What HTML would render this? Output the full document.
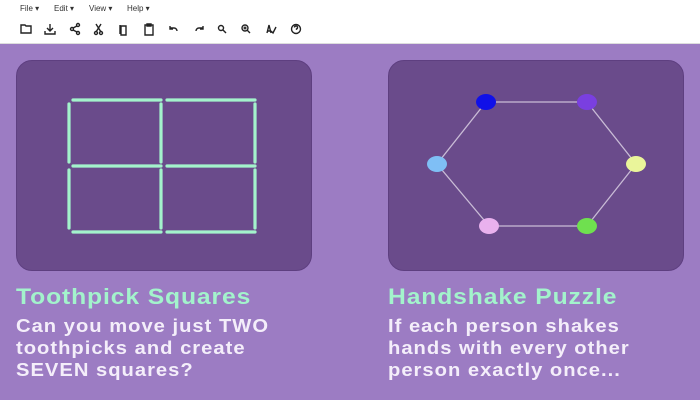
<!DOCTYPE html>
<html><head><style>
*{margin:0;padding:0;box-sizing:border-box}
body{width:700px;height:400px;overflow:hidden;background:#9c7cc3;font-family:"Liberation Sans",sans-serif;position:relative}
.tb{position:absolute;left:0;top:0;width:700px;height:44px;background:#fff;border-bottom:1px solid #ddd}
.menu{position:absolute;top:4px;font-size:8px;color:#333}
.card{position:absolute;top:60px;width:296px;height:211px;background:#6a4b8b;border-radius:16px;border:1px solid #5e3f80}
.t{position:absolute;color:#a3f3cc;font-weight:bold;font-size:22px;letter-spacing:0.8px;top:284px;transform:scaleX(1.12);transform-origin:0 0;white-space:nowrap}
.d{position:absolute;color:#f4eefa;font-weight:bold;font-size:18px;letter-spacing:0.9px;line-height:22px;top:315px;transform:scaleX(1.12);transform-origin:0 0;white-space:nowrap}
</style></head><body>
<div class="tb">
<span class="menu" style="left:20px">File ▾</span>
<span class="menu" style="left:54px">Edit ▾</span>
<span class="menu" style="left:89px">View ▾</span>
<span class="menu" style="left:127px">Help ▾</span>
<svg width="320" height="44" style="position:absolute;left:0;top:0" fill="none" stroke="#222" stroke-width="1.4">
<path d="M21 25h4l1 1h5v7h-10z"/>
<path d="M50 24v6M47 28l3 3 3-3M45 31v3h10v-3"/>
<circle cx="78" cy="25" r="1.5"/><circle cx="78" cy="33" r="1.5"/><circle cx="72" cy="29" r="1.5"/><path d="M73 28l4-2M73 30l4 2"/>
<circle cx="96" cy="33" r="1.5"/><circle cx="101" cy="33" r="1.5"/><path d="M96 24l5 8M101 24l-5 8"/>
<path d="M120 25v9M121 26h5v9h-5z"/>
<path d="M145 25h8v10h-8zM147 24h4v2h-4z"/>
<path d="M170 28h4a3 3 0 0 1 3 3M170 26v3h3"/>
<path d="M203 28h-4a3 3 0 0 0-3 3M203 26v3h-3"/>
<circle cx="221" cy="28" r="2.5"/><path d="M223 30l3 3"/>
<circle cx="245" cy="28" r="3"/><path d="M247 30l3 3M243.5 28h3M245 26.5v3"/>
<path d="M267 33l2-8 2 8M268 31h2M271 31l2 2 3-6"/>
<circle cx="296" cy="29" r="4.5"/><path d="M294.5 27.5a1.5 1.5 0 1 1 2 1.4v1"/>
</svg>
</div>
<div class="card" style="left:16px">
<svg width="296" height="211" style="position:absolute;left:-1px;top:-1px" stroke="#a3f3cc" stroke-width="3.2" stroke-linecap="round">
<path d="M57 40h88M151 40h88M57 106h88M151 106h88M57 172h88M151 172h88"/>
<path d="M53 44v58M145 44v58M239 44v58M53 110v58M145 110v58M239 110v58"/>
</svg></div>
<div class="card" style="left:388px">
<svg width="296" height="211" style="position:absolute;left:-389px;top:-61px;overflow:visible">
<path d="M486 102L587 102L636 164L587 226L489 226L437 164Z" fill="none" stroke="#c9bcd6" stroke-width="1.3"/>
<ellipse cx="486" cy="102" rx="10" ry="8" fill="#1010e8"/>
<ellipse cx="587" cy="102" rx="10" ry="8" fill="#7a3fe0"/>
<ellipse cx="636" cy="164" rx="10" ry="8" fill="#eaf59a"/>
<ellipse cx="587" cy="226" rx="10" ry="8" fill="#6fe04f"/>
<ellipse cx="489" cy="226" rx="10" ry="8" fill="#e9b1ee"/>
<ellipse cx="437" cy="164" rx="10" ry="8" fill="#7fbff5"/>
</svg></div>
<div class="t" style="left:16px">Toothpick Squares</div>
<div class="d" style="left:16px">Can you move just TWO<br>toothpicks and create<br>SEVEN squares?</div>
<div class="t" style="left:388px">Handshake Puzzle</div>
<div class="d" style="left:388px">If each person shakes<br>hands with every other<br>person exactly once...</div>
</body></html>
